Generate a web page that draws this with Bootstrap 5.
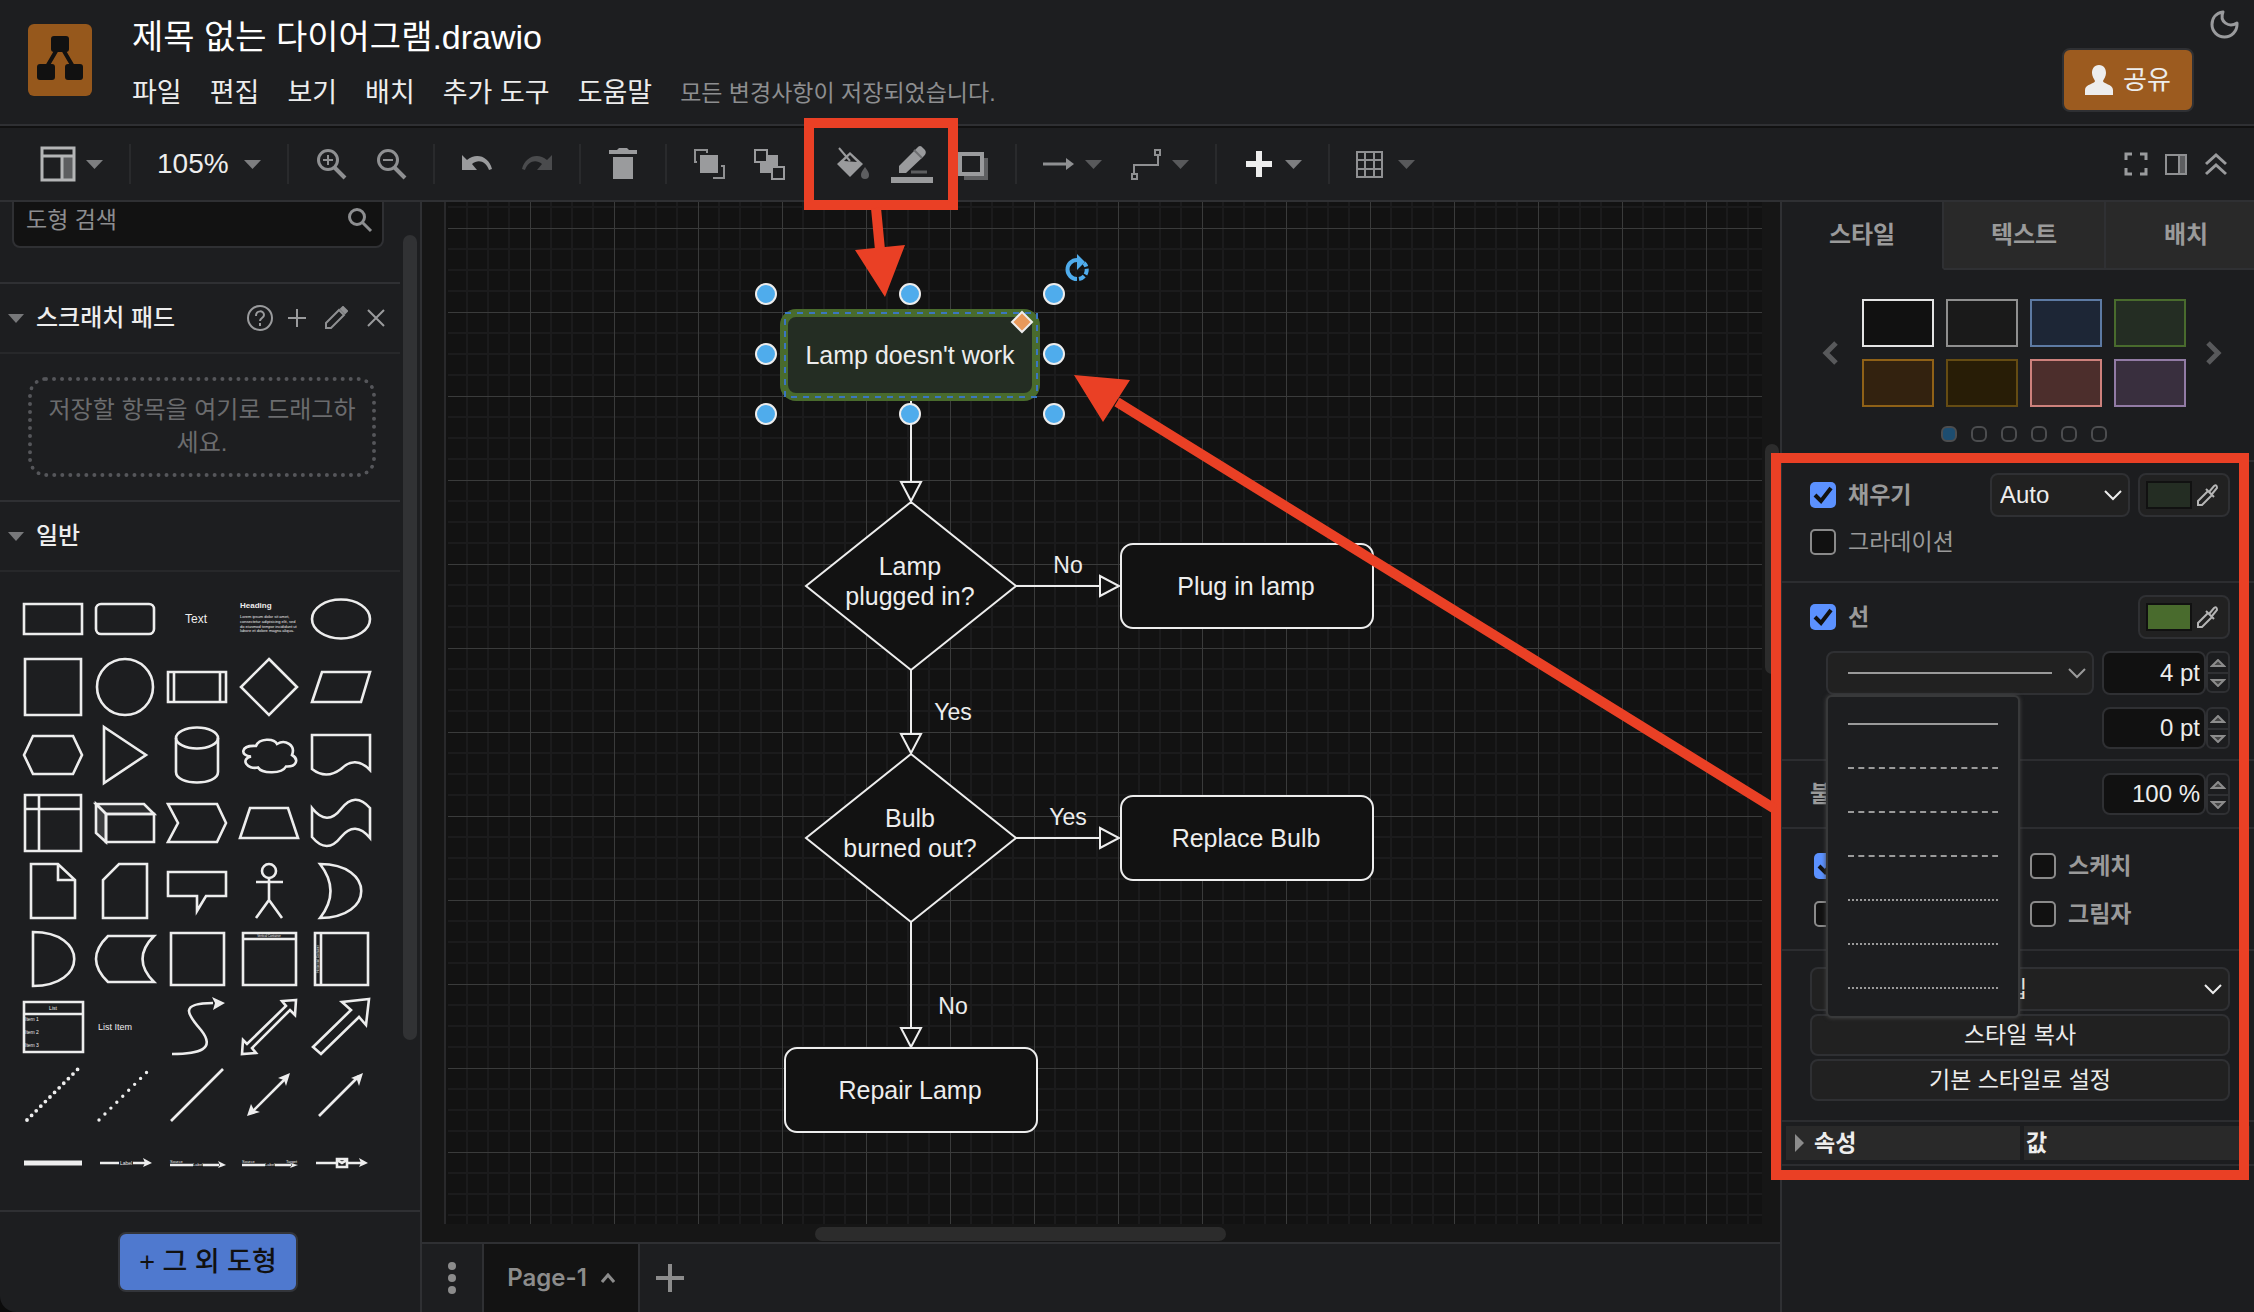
<!DOCTYPE html>
<html lang="ko" data-bs-theme="dark">
<head>
<meta charset="utf-8">
<meta name="viewport" content="width=device-width, initial-scale=1">
<title>제목 없는 다이어그램.drawio</title>
<link href="https://cdn.jsdelivr.net/npm/bootstrap@5.3.0/dist/css/bootstrap.min.css" rel="stylesheet">
<style>
:root{--bg:#1d1e20;--line:#2f3033;--paper:#121212;--icon:#9a9b9d;--ink:#ededed;--ctl:#212121}
body{background:#0c0c0c;color:var(--ink);font-family:"Liberation Sans","Noto Sans CJK KR",sans-serif;font-size:23px;line-height:32px}
button{font-family:inherit;border:0;background:none;padding:0;color:inherit}
svg{display:block;flex:none}
.app{background:var(--bg);border-bottom-left-radius:16px}
.topbar{height:126px;border-bottom:2px solid var(--line);padding:13px 22px 0 28px}
.logo-tile{width:64px;height:72px;margin-top:11px}
.titles{margin-left:40px}
.doc-title{font-size:34px;line-height:48px;margin:0;font-weight:400}
.menus{gap:28px;margin-top:12px;font-size:27px;line-height:40px}
.menus a{color:var(--ink);text-decoration:none}
.saved{font-size:23px;color:#8d8e90}
.share{width:132px;height:64px;margin-top:35px;border:2px solid var(--line);border-radius:8px;background:#9c5b1f;font-size:26px;gap:10px}
.moon{margin:-4px -8px 0 0}
.tools{height:76px;border-top:2px solid #111;border-bottom:2px solid var(--line);padding:0 26px 0 40px;color:var(--icon)}
.tools svg{overflow:visible}
.tools .rule{width:2px;height:40px;background:#292a2c;margin:0 26px}
.tools .set{gap:28px}
.drop-btn{display:flex;align-items:center;gap:10px}
.zoom-btn{width:104px;color:var(--ink);font-size:28px;display:flex;align-items:center;justify-content:space-between}
.side{width:422px;border-right:2px solid var(--line)}
.side-scroll{padding-right:20px}
.find{margin:-10px 16px 34px 12px;height:56px;border:2px solid var(--line);border-radius:8px;background:var(--paper);padding:0 8px 0 12px}
.find input{background:none;border:0;outline:0;color:var(--ink);width:100%;padding:0;font-size:23px}
.find input::placeholder{color:#8d8e90;opacity:1}
.sec-head{border-top:2px solid var(--line);border-bottom:2px solid #27282a;height:72px;padding:0 14px 0 8px;color:var(--icon)}
.sec-head h2{font-size:24px;font-weight:500;margin:0 0 0 12px;color:var(--ink)}
.sec-icons{gap:14px}
.drop-zone{margin:23px 24px 23px 28px;height:100px;padding:12px 10px 0;border:4px dotted #55565a;border-radius:18px;color:#6b6c6e;font-size:24px;line-height:33px;word-break:break-all;text-align:center}
.shapes{display:grid;grid-template-columns:repeat(5,72px);padding:13px 0 12px 17px}
.shapes svg{fill:none;stroke:#ededed;stroke-width:2.6}
.shapes text,.solid{fill:#ededed;stroke:none}
.thumb{background:#313234;border-radius:7px}
.side .thumb{right:3px;top:33px;width:14px;height:805px}
.more{height:102px;border-top:2px solid var(--line)}
.more button{width:180px;height:60px;border:2px solid #33353a;border-radius:8px;background:#4f79cf;color:#111;font-size:27px;font-weight:500}
.center{background:#161616}
.sheet{margin:0 18px 18px 22px;border-left:2px solid #29292b;background:var(--paper)}
.center .thumb{background:#2c2c2c}
.vbar{right:1px;top:242px;width:14px;height:230px}
.hbar{left:393px;bottom:1px;width:411px;height:14px}
.pages{height:70px;border-top:2px solid var(--line);background:var(--bg);color:#8c8c8c}
.page-tab{font-family:Inter,sans-serif;font-size:24px;font-weight:600;width:158px;border:solid var(--line);border-width:0 2px;background:#131313;gap:14px}
.fmt{width:474px;border-left:2px solid var(--line);background:#1c1d1f;color:#9a9a9a}
.fmt-tabs button{flex:none;width:162px;height:68px;font-weight:700;font-size:24px;background:#292929;border-bottom:2px solid var(--line);border-right:2px solid var(--line)}
.fmt-tabs button.on{background:none;border-bottom-color:transparent}
.fmt section{border-bottom:2px solid #2c2d30;padding:0 24px 0 28px}
.fmt .s-styles{padding-top:29px;padding-bottom:18px}
.fmt .s-fill{padding-top:11px;padding-bottom:26px}
.s-fill>*+*,.s-line>*+*{margin-top:12px}
.fmt .s-line{padding-top:12px;padding-bottom:10px}
.fmt .s-opac{padding-top:12px;padding-bottom:12px}
.fmt .s-flags{display:grid;grid-template-columns:216px 1fr;row-gap:22px;padding:24px 24px 22px 32px}
.fmt .s-acts{gap:3px;padding-top:16px;padding-bottom:19px}
.swatches{display:grid;grid-template-columns:repeat(4,72px);gap:12px}
.swatches button{height:48px;border:2px solid}
.pager{gap:14px;margin-top:19px}
.pager button{width:16px;height:16px;border:2px solid #4c4d4f;border-radius:6px}
.pager .on{background:#1d4d70}
.fmt .form-check-input{width:26px;height:26px;margin:0;border:2px solid #8a8a8a;border-radius:5px;background:#111 center/26px no-repeat;flex:none;float:none}
.fmt .form-check-input:checked{border:0;background-color:#5b91ff;background-image:url("data:image/svg+xml,%3Csvg xmlns='http://www.w3.org/2000/svg' viewBox='0 0 26 26'%3E%3Cpath d='M5 13l6 6L21 6' fill='none' stroke='%23111' stroke-width='4'/%3E%3C/svg%3E")}
.tick{display:flex;align-items:center;gap:12px;height:26px;font-weight:700}
.ctl{height:44px;border:2px solid var(--line);border-radius:8px;background:var(--ctl);color:var(--ink)}
.ctl-sel{font-size:24px;appearance:none;background:var(--ctl) right 6px center/18px 12px no-repeat url("data:image/svg+xml,%3Csvg xmlns='http://www.w3.org/2000/svg' viewBox='0 0 18 12'%3E%3Cpath d='M1 2l8 8 8-8' fill='none' stroke='%23ededed' stroke-width='2'/%3E%3C/svg%3E")}
.auto-sel{width:140px;padding:0 8px}
.edit-sel{font-size:23px;text-align-last:center;padding:0 36px 0 8px}
.paint{width:92px;padding:0 8px 0 6px;display:flex;align-items:center;justify-content:space-between}
.chip{width:46px;height:28px;border:2px solid #111}
.style-btn{width:268px;padding:0 6px 0 20px}
.num{width:104px;background:#111;text-align:right;font-size:24px;padding:0 4px}
.h42{height:42px}
.spin{width:24px;height:42px;border:2px solid var(--line);border-radius:6px}
.spin button{height:19px;display:flex;align-items:center;justify-content:center}
.spin button+button{border-top:2px solid var(--line)}
.line-menu{position:absolute;left:0;top:44px;z-index:5;width:194px;padding:5px 20px 6px;border:2px solid #38393a;border-radius:6px;background:var(--bg);box-shadow:0 0 4px #444}
.line-menu button{display:flex;align-items:center;width:100%;height:44px}
.wide{height:42px;font-size:23px}
.props{border-collapse:separate;border-spacing:4px;width:472px;margin:0;color:var(--ink)}
.props th{background:#292929;padding:0 2px;height:34px;line-height:32px}
.props th:first-child{width:234px}
.notes{position:absolute;left:0;top:0;z-index:10;pointer-events:none}
</style>
<script src="https://cdn.jsdelivr.net/npm/bootstrap@5.3.0/dist/js/bootstrap.bundle.min.js"></script>
</head>
<body>
<div class="app d-flex flex-column vh-100 overflow-hidden position-relative">
<header class="topbar d-flex flex-shrink-0">
  <svg class="logo-tile" viewBox="0 0 64 72" aria-label="draw.io"><rect width="64" height="72" rx="6" fill="#96581c"/><path d="M31 22L17 46M33 22l14 24" stroke="#111" stroke-width="4"/><g fill="#111"><rect x="23" y="12" width="18" height="16" rx="3"/><rect x="9" y="40" width="18" height="16" rx="3"/><rect x="37" y="40" width="18" height="16" rx="3"/></g></svg>
  <div class="titles flex-grow-1">
    <h1 class="doc-title">제목 없는 다이어그램.drawio</h1>
    <nav class="menus d-flex align-items-center"><a href="#">파일</a><a href="#">편집</a><a href="#">보기</a><a href="#">배치</a><a href="#">추가 도구</a><a href="#">도움말</a><span class="saved">모든 변경사항이 저장되었습니다.</span></nav>
  </div>
  <button class="share d-flex align-items-center justify-content-center me-3"><svg width="28" height="30" viewBox="0 0 28 30" fill="#ededed"><path d="M14 0c5 0 7 4 7 8 0 3-2 6-3 8 0 3 10 3 10 9v5H0v-5c0-6 10-6 10-9-1-2-3-5-3-8 0-4 2-8 7-8z"/></svg>공유</button>
  <button class="moon align-self-start" aria-label="테마"><svg width="30" height="30" viewBox="0 0 30 30" fill="none" stroke="#9a9b9d" stroke-width="3" stroke-linejoin="round"><path d="M13 3C6 4 2 9 2 15.500a12.500 12.500 0 0 0 25 0V14C19 19 9 13 13 3z"/></svg></button>
</header>
<div class="tools d-flex align-items-center flex-shrink-0">
  <button class="drop-btn" aria-label="보기"><svg width="36" height="36" viewBox="0 0 36 36" fill="none" stroke="#b4b5b6" stroke-width="3"><path d="M22 10h12v24H22z" fill="#5d5e60" stroke="none"/><path d="M2 2h32v32H2zM2 10h32M22 10v24"/></svg><svg width="17" height="9"><path d="M0 0h17L8.500 9z" fill="#7d7e80"/></svg></button>
  <i class="rule"></i>
  <button class="zoom-btn"><span>105%</span><svg width="17" height="9"><path d="M0 0h17L8.500 9z" fill="#7d7e80"/></svg></button>
  <i class="rule"></i>
  <div class="set d-flex">
    <button aria-label="확대"><svg width="32" height="32" viewBox="0 0 32 32" fill="none" stroke="#8f9092" stroke-width="3"><circle cx="13" cy="12" r="9.500"/><path d="M19 19l11 11" stroke-width="4"/><path d="M8 12h10M13 7v10" stroke-width="2"/></svg></button>
    <button aria-label="축소"><svg width="32" height="32" viewBox="0 0 32 32" fill="none" stroke="#8f9092" stroke-width="3"><circle cx="13" cy="12" r="9.500"/><path d="M19 19l11 11" stroke-width="4"/><path d="M8 12h10" stroke-width="2"/></svg></button>
  </div>
  <i class="rule"></i>
  <div class="set d-flex">
    <button aria-label="실행 취소"><svg width="32" height="32" viewBox="0 0 32 32" fill="#9a9b9d"><path d="M1 7l5 5C15 4 28 8 31 21l-3 1C25 13 17 11 11 16l5 6H1z"/></svg></button>
    <button aria-label="다시 실행"><svg width="32" height="32" viewBox="0 0 32 32" fill="#4a4b4d"><path d="M31 7l-5 5C17 4 4 8 1 21l3 1C7 13 15 11 21 16l-5 6h15z"/></svg></button>
  </div>
  <i class="rule"></i>
  <button aria-label="삭제"><svg width="32" height="32" viewBox="0 0 32 32" fill="#9a9b9d"><path d="M6 9h20v22H6zM2 2h8l2-2h8l2 2h8v4H2z"/></svg></button>
  <i class="rule"></i>
  <div class="set d-flex align-items-center">
    <button aria-label="맨 앞으로"><svg width="32" height="32" viewBox="0 0 32 32" fill="none" stroke="#8f9092" stroke-width="2"><path d="M4 14H2V2h12v3M20 30h11V18h-3"/><rect x="7" y="7" width="18" height="18" fill="#9a9b9d" stroke="none"/></svg></button>
    <button aria-label="맨 뒤로"><svg width="32" height="32" viewBox="0 0 32 32" stroke="#9a9b9d" stroke-width="2"><rect x="7" y="7" width="18" height="18" fill="#9a9b9d" stroke="none"/><g fill="#1d1e20"><rect x="2" y="2" width="12" height="12"/><rect x="19" y="19" width="12" height="12"/></g></svg></button>
    <button class="ms-4" aria-label="채우기 색상"><svg width="32" height="32" viewBox="0 0 32 32"><path d="M0 16L13 4l13 12-13 13z" fill="#9a9b9d"/><path d="M7 13l6-6 7 7z" fill="#1d1e20"/><path d="M2 0l11 13" stroke="#9a9b9d" stroke-width="2"/><path d="M28 19c3 4 4 6 4 8a4 4 0 0 1-8 0c0-2 1-4 4-8z" fill="#5d5e60"/></svg></button>
    <button aria-label="선 색상"><svg width="32" height="40" viewBox="6 0 32 40"><path d="M8 22L26 4q3-4 6 0l2 2q2 3-1 6L15 29H8z" fill="#9a9b9d"/><path d="M23 6l8 8" stroke="#6d6e70" stroke-width="2"/><path d="M20 28h16" stroke="#5d5e60" stroke-width="3"/><path d="M0 36h42" stroke="#9a9b9d" stroke-width="6"/></svg></button>
    <button aria-label="그림자"><svg width="32" height="32" viewBox="0 0 32 32"><path d="M7 10h24v22H7z" fill="#5f6062"/><path d="M3 6h22v20H3z" fill="#1d1e20" stroke="#9a9b9d" stroke-width="4"/></svg></button>
  </div>
  <i class="rule"></i>
  <div class="set d-flex">
    <button class="drop-btn" aria-label="연결"><svg width="32" height="32" viewBox="0 0 32 32"><path d="M0 16h24" stroke="#8f9092" stroke-width="3"/><path d="M23 10l8 6-8 6z" fill="#8f9092"/></svg><svg width="17" height="9"><path d="M0 0h17L8.500 9z" fill="#58595b"/></svg></button>
    <button class="drop-btn" aria-label="경유지"><svg width="32" height="32" viewBox="0 0 32 32" fill="none" stroke="#8f9092" stroke-width="2"><path d="M4 26V17h24V7M2 26h5v5H2zM25 2h5v5h-5z"/></svg><svg width="17" height="9"><path d="M0 0h17L8.500 9z" fill="#58595b"/></svg></button>
  </div>
  <i class="rule"></i>
  <button class="drop-btn" aria-label="삽입"><svg width="32" height="32" viewBox="0 0 32 32"><path d="M3 16h26M16 3v26" stroke="#ededed" stroke-width="6"/></svg><svg width="17" height="9"><path d="M0 0h17L8.500 9z" fill="#7d7e80"/></svg></button>
  <i class="rule"></i>
  <button class="drop-btn" aria-label="표"><svg width="32" height="32" viewBox="0 0 32 32" fill="none" stroke="#8f9092" stroke-width="2"><path d="M1 4h25v25H1zM1 12h25M1 21h25M9 4v25M18 4v25"/></svg><svg width="17" height="9"><path d="M0 0h17L8.500 9z" fill="#58595b"/></svg></button>
  <div class="d-flex gap-3 ms-auto">
    <button aria-label="전체 화면"><svg width="24" height="24" fill="none" stroke="#9a9b9d" stroke-width="3"><path d="M2 8V2h6M16 2h6v6M22 16v6h-6M8 22H2v-6"/></svg></button>
    <button aria-label="서식"><svg width="24" height="24" fill="none" stroke="#8f9092" stroke-width="2"><path d="M15 3h7v19h-7z" fill="#5d5e60"/><path d="M2 3h20v19H2z"/></svg></button>
    <button aria-label="접기"><svg width="24" height="24" fill="none" stroke="#9a9b9d" stroke-width="3"><path d="M2 12l10-9 10 9M2 22l10-9 10 9"/></svg></button>
  </div>
</div>
<main class="d-flex flex-grow-1 overflow-hidden">
<aside class="side d-flex flex-column flex-shrink-0 position-relative">
  <div class="side-scroll flex-grow-1 overflow-hidden">
    <label class="find d-flex align-items-center"><input type="text" placeholder="도형 검색" aria-label="도형 검색"><svg width="26" height="26" fill="none" stroke="#8d8e90" stroke-width="3"><circle cx="9" cy="10" r="7.500"/><path d="M14 15l9 9"/></svg></label>
    <div class="sec-head d-flex align-items-center"><svg width="16" height="9"><path d="M0 0h16L8 9z" fill="#77787a"/></svg><h2>스크래치 패드</h2>
      <div class="sec-icons d-flex align-items-center ms-auto"><svg width="28" height="28" fill="none" stroke="#9a9b9d" stroke-width="2"><circle cx="14" cy="14" r="12"/><path d="M10 12c0-6 8-6 8-1 0 3-4 3-4 6M14 19v3"/></svg><svg width="18" height="18" stroke="#9a9b9d" stroke-width="2"><path d="M0 9h18M9 0v18"/></svg><svg class="ms-1" width="24" height="24" fill="none" stroke="#8f9092" stroke-width="2"><path d="M2 22v-5L15 4l5 5L7 22z"/><path d="M17 3l2-2 4 4-2 2z" fill="#8f9092"/></svg><svg class="ms-1" width="20" height="18" stroke="#9a9b9d" stroke-width="2"><path d="M2 1l16 16M18 1L2 17"/></svg></div>
    </div>
    <div class="drop-zone">저장할 항목을 여기로 드래그하세요.</div>
    <div class="sec-head d-flex align-items-center"><svg width="16" height="9"><path d="M0 0h16L8 9z" fill="#77787a"/></svg><h2>일반</h2></div>
    <div class="shapes">
      <svg width="72" height="68" viewBox="-36 -34 72 68"><path d="M-29-15h58v30h-58z"/></svg>
      <svg width="72" height="68" viewBox="-36 -34 72 68"><rect x="-29" y="-15" width="58" height="30" rx="5"/></svg>
      <svg width="72" height="68" viewBox="-36 -34 72 68"><text x="-1" y="4" font-size="12" text-anchor="middle">Text</text></svg>
      <svg width="72" height="68" viewBox="-36 -34 72 68"><text x="-29" y="-11" font-size="8" font-weight="700">Heading</text><g font-size="4"><text x="-29" y="-1">Lorem ipsum dolor sit amet,</text><text x="-29" y="4">consectetur adipisicing elit, sed</text><text x="-29" y="9">do eiusmod tempor incididunt ut</text><text x="-29" y="13">labore et dolore magna aliqua.</text></g></svg>
      <svg width="72" height="68" viewBox="-36 -34 72 68"><ellipse rx="29" ry="19.500"/></svg>
      <svg width="72" height="68" viewBox="-36 -34 72 68"><path d="M-28-28h56v56h-56z"/></svg>
      <svg width="72" height="68" viewBox="-36 -34 72 68"><circle r="28"/></svg>
      <svg width="72" height="68" viewBox="-36 -34 72 68"><path d="M-29-15h58v30h-58zM-23-15v30M23-15v30"/></svg>
      <svg width="72" height="68" viewBox="-36 -34 72 68"><path d="M0-28L28 0 0 28-28 0z"/></svg>
      <svg width="72" height="68" viewBox="-36 -34 72 68"><path d="M-19-15h48l-9 30h-49z"/></svg>
      <svg width="72" height="68" viewBox="-36 -34 72 68"><path d="M-29 0l9-19h40l9 19-9 19h-40z"/></svg>
      <svg width="72" height="68" viewBox="-36 -34 72 68"><path d="M-21-28L21 0-21 28z"/></svg>
      <svg width="72" height="68" viewBox="-36 -34 72 68"><path d="M-21-17v34c0 14 42 14 42 0v-34"/><ellipse cy="-17" rx="21" ry="10.500"/></svg>
      <svg width="72" height="68" viewBox="-36 -34 72 68"><path d="M-13-9C-10-17 5-17 8-11 16-16 27-10 23 0 30 4 28 12 17 11.500 13 19-7 19-11 12.500-22 15-29 4-18 1.500-29 1-29-10-13-9z"/></svg>
      <svg width="72" height="68" viewBox="-36 -34 72 68"><path d="M-29-20h58v35Q14 0 0 14-15 25-29 14z"/></svg>
      <svg width="72" height="68" viewBox="-36 -34 72 68"><path d="M-28-28h56v56h-56zM-14-28v56M-28-14h56"/></svg>
      <svg width="72" height="68" viewBox="-36 -34 72 68"><path d="M-29-19h48l10 10h-48z" fill="#2b2c2e"/><path d="M-29-19l10 10v28l-10-9z" fill="#3b3c3e"/><path d="M-19-9h48v28h-48z"/></svg>
      <svg width="72" height="68" viewBox="-36 -34 72 68"><path d="M-29-19h49l9 19-9 19h-49l10-19z"/></svg>
      <svg width="72" height="68" viewBox="-36 -34 72 68"><path d="M-19-15h38l10 30h-58z"/></svg>
      <svg width="72" height="68" viewBox="-36 -34 72 68"><path d="M-29-15Q-14 4 0-14 14-32 29-15v30Q14-3 0 14-14 32-29 14z"/></svg>
      <svg width="72" height="68" viewBox="-36 -34 72 68"><path d="M-22-27H5l17 16v38h-44zM5-27v16h17"/></svg>
      <svg width="72" height="68" viewBox="-36 -34 72 68"><path d="M-6-27h28v54h-44v-38z"/></svg>
      <svg width="72" height="68" viewBox="-36 -34 72 68"><path d="M-29-19h58V5H9L0 20V5h-29z"/></svg>
      <svg width="72" height="68" viewBox="-36 -34 72 68"><circle cy="-20" r="7"/><path d="M0-13V9M-13-9h27M-13 27L0 9l13 18"/></svg>
      <svg width="72" height="68" viewBox="-36 -34 72 68"><path d="M-21-27C34-27 34 27-21 27Q0 0-21-27z"/></svg>
      <svg width="72" height="68" viewBox="-36 -34 72 68"><path d="M-20-27C35-27 35 27-20 27z"/></svg>
      <svg width="72" height="68" viewBox="-36 -34 72 68"><path d="M-17-23h46Q6 0 29 23h-46Q-41 0-17-23z"/></svg>
      <svg width="72" height="68" viewBox="-36 -34 72 68"><path d="M-26-26h53v52h-53z"/></svg>
      <svg width="72" height="68" viewBox="-36 -34 72 68"><path d="M-26-26h53v52h-53zM-26-20h53"/><text y="-22" font-size="3" text-anchor="middle">Vertical Container</text></svg>
      <svg width="72" height="68" viewBox="-36 -34 72 68"><path d="M-26-26h53v52h-53zM-20-26v52"/><text transform="rotate(-90)" y="-22" font-size="3" text-anchor="middle">Horizontal Container</text></svg>
      <svg width="72" height="68" viewBox="-36 -34 72 68"><path d="M-29-25h59v50h-59zM-29-13h59"/><g font-size="5"><text y="-17" text-anchor="middle">List</text><text x="-28" y="-6">Item 1</text><text x="-28" y="7">Item 2</text><text x="-28" y="20">Item 3</text></g></svg>
      <svg width="72" height="68" viewBox="-36 -34 72 68"><text x="-27" y="3" font-size="9">List Item</text></svg>
      <svg width="72" height="68" viewBox="-36 -34 72 68"><path d="M-25 27C3 27 19 22 4 3-10-13-18-24 16-24"/><path class="solid" d="M28-24L15-30l3 6-2 7z"/></svg>
      <svg width="72" height="68" viewBox="-36 -34 72 68"><path d="M27-27l-14 1 4 5-39 38-4-4-1 14 14-1-4-5 38-38 5 5z"/></svg>
      <svg width="72" height="68" viewBox="-36 -34 72 68"><path d="M28-28L1-25l9 8-38 37 8 7 38-37 7 8z"/></svg>
      <svg width="72" height="68" viewBox="-36 -34 72 68"><path d="M-26 25L25-26" stroke-width="3.800" stroke-linecap="round" stroke-dasharray="0 6.500"/></svg>
      <svg width="72" height="68" viewBox="-36 -34 72 68"><path d="M-26 25L23-24" stroke-width="3.400" stroke-linecap="round" stroke-dasharray="0 8.400"/></svg>
      <svg width="72" height="68" viewBox="-36 -34 72 68"><path d="M-26 26l52-52"/></svg>
      <svg width="72" height="68" viewBox="-36 -34 72 68"><path d="M-18 18l36-36"/><path class="solid" d="M21-22L9-17l6 2 2 6zM-22 21l4-12 3 6 6 2z"/></svg>
      <svg width="72" height="68" viewBox="-36 -34 72 68"><path d="M-22 21l40-40"/><path class="solid" d="M22-22L10-17l6 2 2 6z"/></svg>
      <svg width="72" height="68" viewBox="-36 -34 72 68"><path d="M-29 0h58" stroke-width="5"/></svg>
      <svg width="72" height="68" viewBox="-36 -34 72 68"><path d="M-25 0h19M8 0h12"/><path class="solid" d="M27 0l-9-5 2 5-2 4z"/><text x="1" y="2" font-size="5" text-anchor="middle">Label</text></svg>
      <svg width="72" height="68" viewBox="-36 -34 72 68"><path d="M-27 2h23M6 2h16"/><path class="solid" d="M29 2l-8-4 2 4-2 3z"/><text x="-27" y="0" font-size="4">Source</text><text x="1" y="3" font-size="4" text-anchor="middle">Label</text></svg>
      <svg width="72" height="68" viewBox="-36 -34 72 68"><path d="M-27 2h23M6 2h16"/><path class="solid" d="M29 2l-8-2 2 2-2 3z"/><text x="-27" y="0" font-size="4">Source</text><text x="1" y="3" font-size="4" text-anchor="middle">Label</text><text x="17" y="0" font-size="4">Target</text></svg>
      <svg width="72" height="68" viewBox="-36 -34 72 68"><path d="M-25 0h20M7 0h13"/><path class="solid" d="M27 0l-9-5 2 5-2 4z"/><path d="M-4-4H6v8H-4zM-4-3l5 3 5-3"/></svg>
    </div>
  </div>
  <div class="thumb position-absolute"></div>
  <div class="more d-flex align-items-center justify-content-center"><button class="me-1">+ 그 외 도형</button></div>
</aside>
<div class="center d-flex flex-column flex-grow-1 overflow-hidden">
  <div class="flex-grow-1 d-flex position-relative overflow-hidden">
    <div class="sheet flex-grow-1 overflow-hidden position-relative">
      <svg class="position-absolute" width="100%" height="100%" font-size="25" text-anchor="middle">
        <defs><pattern id="grid" width="84" height="84" y="26" patternUnits="userSpaceOnUse"><path d="M21 0v84M42 0v84M63 0v84M0 21h84M0 42h84M0 63h84" stroke="#1b1b1c" stroke-width="2"/><path d="M0 0h1v84H0zM0 0h84v1H0z" fill="#3a3b3b"/></pattern></defs>
        <rect x="2" width="100%" height="100%" fill="url(#grid)"/>
        <g transform="translate(-446 -202)">
          <g fill="#121212" stroke="#ededed" stroke-width="2">
            <path d="M911 397v84M911 670v63M911 922v105M1016 586h83M1016 838h83"/>
            <path d="M901 482h20l-10 19zM901 734h20l-10 19zM901 1028h20l-10 19zM1100 576v20l19-10zM1100 828v20l19-10z"/>
            <path d="M911 502l105 84-105 84-105-84zM911 754l105 84-105 84-105-84z"/>
            <rect x="1121" y="544" width="252" height="84" rx="12"/><rect x="1121" y="796" width="252" height="84" rx="12"/><rect x="785" y="1048" width="252" height="84" rx="12"/>
          </g>
          <rect x="784" y="313" width="252" height="84" rx="12" fill="#242d23" stroke="#496b2d" stroke-width="8"/>
          <rect x="785" y="313" width="252" height="84" fill="none" stroke="#3b76c0" stroke-width="2" stroke-dasharray="6 6"/>
          <g fill="#ededed"><text x="910" y="364">Lamp doesn't work</text><text x="910" y="575">Lamp</text><text x="910" y="605">plugged in?</text><text x="1246" y="595">Plug in lamp</text><text x="910" y="827">Bulb</text><text x="910" y="857">burned out?</text><text x="1246" y="847">Replace Bulb</text><text x="910" y="1099">Repair Lamp</text>
          <g font-size="23"><text x="1068" y="573">No</text><text x="953" y="720">Yes</text><text x="1068" y="825">Yes</text><text x="953" y="1014">No</text></g></g>
          <g fill="#4facec" stroke="#ededed" stroke-width="2"><circle cx="766" cy="294" r="10"/><circle cx="910" cy="294" r="10"/><circle cx="1054" cy="294" r="10"/><circle cx="766" cy="354" r="10"/><circle cx="1054" cy="354" r="10"/><circle cx="766" cy="414" r="10"/><circle cx="910" cy="414" r="10"/><circle cx="1054" cy="414" r="10"/><path d="M1022 312l10 10-10 10-10-10z" fill="#e8995b"/></g>
          <path d="M1077 260a9.500 9.500 0 0 0 0 19" fill="none" stroke="#4facec" stroke-width="4"/><path d="M1079 279a9.500 9.500 0 0 0 5-16" fill="none" stroke="#4facec" stroke-width="4" stroke-dasharray="6 2"/><path d="M1077 254l8 8-8 8z" fill="#4facec"/>
        </g>
      </svg>
    </div>
    <div class="thumb vbar position-absolute"></div><div class="thumb hbar position-absolute"></div>
  </div>
  <div class="pages d-flex flex-shrink-0">
    <button class="px-4" aria-label="페이지"><svg width="12" height="34" fill="#8c8c8c"><circle cx="6" cy="5" r="4"/><circle cx="6" cy="17" r="4"/><circle cx="6" cy="29" r="4"/></svg></button>
    <button class="page-tab d-flex align-items-center justify-content-center">Page-1<svg width="14" height="10" fill="none" stroke="#8c8c8c" stroke-width="3"><path d="M1 9l6-7 6 7"/></svg></button>
    <button class="px-3" aria-label="페이지 추가"><svg width="28" height="28" stroke="#8c8c8c" stroke-width="4"><path d="M0 14h28M14 0v28"/></svg></button>
  </div>
</div>
<aside class="fmt flex-shrink-0 overflow-hidden">
  <div class="fmt-tabs d-flex"><button class="on">스타일</button><button>텍스트</button><button>배치</button></div>
  <section class="s-styles">
    <div class="d-flex align-items-center justify-content-between px-2">
      <button class="ps-1" aria-label="이전"><svg width="16" height="24" fill="none" stroke="#58595b" stroke-width="5"><path d="M14 2L4 12l10 10"/></svg></button>
      <div class="swatches ms-1"><button style="background:#111;border-color:#e4e4e4"></button><button style="background:#1a1a1a;border-color:#8f8f8f"></button><button style="background:#1d2636;border-color:#5d7aa3"></button><button style="background:#242d23;border-color:#496b2d"></button><button style="background:#33220f;border-color:#8f6117"></button><button style="background:#281d06;border-color:#654c13"></button><button style="background:#4c2e2c;border-color:#cd817c"></button><button style="background:#392f3e;border-color:#927ba5"></button></div>
      <button aria-label="다음"><svg width="16" height="24" fill="none" stroke="#58595b" stroke-width="5"><path d="M2 2l10 10L2 22"/></svg></button>
    </div>
    <div class="pager d-flex justify-content-center ps-2"><button class="on"></button><button></button><button></button><button></button><button></button><button></button></div>
  </section>
  <section class="s-fill">
    <div class="d-flex align-items-center gap-2"><label class="tick me-auto"><input class="form-check-input" type="checkbox" checked>채우기</label><select class="ctl ctl-sel auto-sel" aria-label="채우기 방식"><option>Auto</option></select><button class="ctl paint" aria-label="채우기 색상"><span class="chip" style="background:#242d23"></span><svg width="24" height="24" fill="none" stroke="#b5b5b5" stroke-width="2"><path d="M12 8L2 18v4h4L16 12M10 6l8 8M13 9l5-6q3-2 3 2l-5 6"/></svg></button></div>
    <label class="tick fw-normal"><input class="form-check-input" type="checkbox">그라데이션</label>
  </section>
  <section class="s-line">
    <div class="d-flex align-items-center"><label class="tick me-auto"><input class="form-check-input" type="checkbox" checked>선</label><button class="ctl paint" aria-label="선 색상"><span class="chip" style="background:#496b2d"></span><svg width="24" height="24" fill="none" stroke="#b5b5b5" stroke-width="2"><path d="M12 8L2 18v4h4L16 12M10 6l8 8M13 9l5-6q3-2 3 2l-5 6"/></svg></button></div>
    <div class="d-flex justify-content-end">
      <div class="position-relative me-2"><button class="ctl style-btn d-flex align-items-center justify-content-between" aria-label="선 유형"><svg width="204" height="2"><path d="M0 1h204" stroke="#9a9a9a" stroke-width="2"/></svg><svg width="18" height="12" fill="none" stroke="#9a9a9a" stroke-width="2"><path d="M1 2l8 8 8-8"/></svg></button>
        <div class="line-menu">
          <button aria-label="실선"><svg width="150" height="2" stroke="#9a9a9a" stroke-width="2"><path d="M0 1h150"/></svg></button>
          <button aria-label="파선 1"><svg width="150" height="2" stroke="#9a9a9a" stroke-width="2"><path d="M0 1h150" stroke-dasharray="6 4.300"/></svg></button>
          <button aria-label="파선 2"><svg width="150" height="2" stroke="#9a9a9a" stroke-width="2"><path d="M0 1h150" stroke-dasharray="6 4.300"/></svg></button>
          <button aria-label="파선 3"><svg width="150" height="2" stroke="#9a9a9a" stroke-width="2"><path d="M0 1h150" stroke-dasharray="6 4.300"/></svg></button>
          <button aria-label="점선 1"><svg width="150" height="2" stroke="#9a9a9a" stroke-width="2"><path d="M0 1h150" stroke-dasharray="2 2"/></svg></button>
          <button aria-label="점선 2"><svg width="150" height="2" stroke="#9a9a9a" stroke-width="2"><path d="M0 1h150" stroke-dasharray="2 2"/></svg></button>
          <button aria-label="점선 3"><svg width="150" height="2" stroke="#9a9a9a" stroke-width="2"><path d="M0 1h150" stroke-dasharray="2 2"/></svg></button>
        </div></div>
      <input class="ctl num" value="4 pt" aria-label="선 굵기"><div class="spin d-flex flex-column"><button aria-label="증가"><svg width="16" height="8" stroke="#8c8c8c" stroke-width="2" fill="#444"><path d="M2 7h12L8 1z"/></svg></button><button aria-label="감소"><svg width="16" height="8" stroke="#8c8c8c" stroke-width="2" fill="#444"><path d="M2 1h12L8 7z"/></svg></button></div>
    </div>
    <div class="d-flex justify-content-end"><input class="ctl num h42" value="0 pt" aria-label="둘레"><div class="spin d-flex flex-column"><button aria-label="증가"><svg width="16" height="8" stroke="#8c8c8c" stroke-width="2" fill="#444"><path d="M2 7h12L8 1z"/></svg></button><button aria-label="감소"><svg width="16" height="8" stroke="#8c8c8c" stroke-width="2" fill="#444"><path d="M2 1h12L8 7z"/></svg></button></div></div>
  </section>
  <section class="s-opac d-flex align-items-center"><label class="fw-bold me-auto" for="opac">불투명도</label><input id="opac" class="ctl num h42" value="100 %"><div class="spin d-flex flex-column"><button aria-label="증가"><svg width="16" height="8" stroke="#8c8c8c" stroke-width="2" fill="#444"><path d="M2 7h12L8 1z"/></svg></button><button aria-label="감소"><svg width="16" height="8" stroke="#8c8c8c" stroke-width="2" fill="#444"><path d="M2 1h12L8 7z"/></svg></button></div></section>
  <section class="s-flags">
    <label class="tick"><input class="form-check-input" type="checkbox" checked>둥글게</label><label class="tick"><input class="form-check-input" type="checkbox">스케치</label>
    <label class="tick"><input class="form-check-input" type="checkbox">유리</label><label class="tick"><input class="form-check-input" type="checkbox">그림자</label>
  </section>
  <section class="s-acts d-flex flex-column"><select class="ctl ctl-sel edit-sel" aria-label="편집"><option>편집</option></select><button class="ctl wide">스타일 복사</button><button class="ctl wide">기본 스타일로 설정</button></section>
  <section class="p-0"><table class="props"><thead><tr><th scope="col"><span class="d-flex align-items-center"><svg class="ms-1 me-2" width="14" height="18"><path d="M3 0v18l9-9z" fill="#8c8c8c"/></svg>속성</span></th><th scope="col">값</th></tr></thead></table></section>
</aside>
</main>
<svg class="notes" width="2254" height="1312" fill="none" stroke="#ea4025" stroke-width="10">
  <rect x="809" y="123" width="144" height="82"/><rect x="1776" y="458" width="468" height="717"/>
  <path d="M876 208l4 42M1117 402l658 407"/><path d="M885 297l-30-47 50-5zM1074 375l56 5-27 42z" fill="#ea4025" stroke="none"/>
</svg>
</div>
</body>
</html>
